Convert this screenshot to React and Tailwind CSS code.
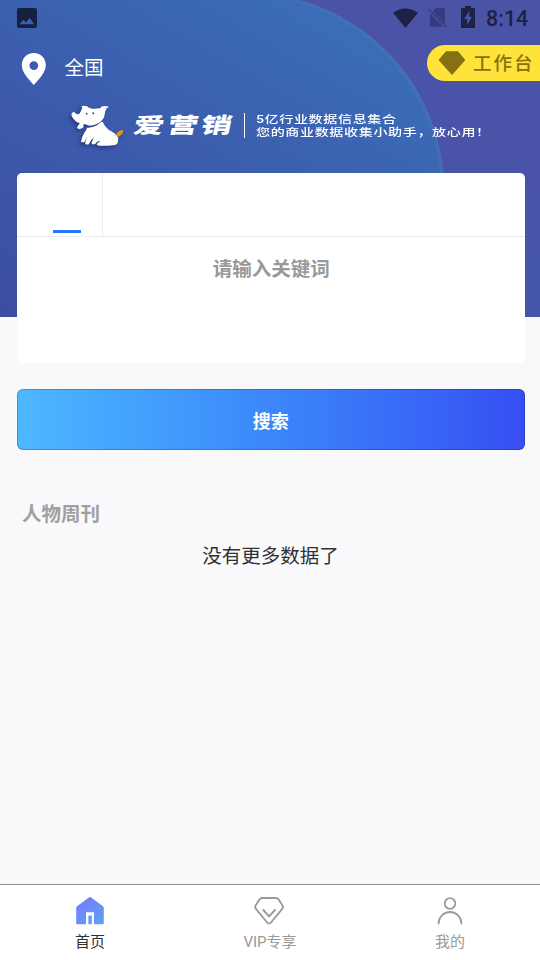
const tabs = [
  { label: "首页", icon: HomeIcon, active: true },
  { label: "VIP专享", icon: VipIcon, active: false },
  { label: "我的", icon: UserIcon, active: false },
];

function HomeIcon() {
  return (
    <svg width="30" height="30" viewBox="0 0 30 30">
      <defs>
        <linearGradient id="home" x1="0.2" y1="0" x2="0.8" y2="1">
          <stop offset="0" stopColor="#7a78fb" />
          <stop offset="1" stopColor="#5ca2f3" />
        </linearGradient>
      </defs>
      <path
        d="M14.2 1.3Q15 .7 15.8 1.3L28 10.2Q28.8 10.8 28.8 11.8V27.2Q28.8 28.2 27.8 28.2H19V16.2H11V28.2H2.2Q1.2 28.2 1.2 27.2V11.8Q1.2 10.8 2 10.2Z"
        fill="url(#home)"
      />
      <path d="M13.3 28.2V19.6H16.9V28.2Z" fill="#68a0f8" />
    </svg>
  );
}

function VipIcon() {
  return (
    <svg className="-ml-0.5" width="32" height="30" viewBox="0 0 32 30" fill="none" stroke="#9a9a9a" strokeWidth="1.9" strokeLinecap="round" strokeLinejoin="round">
      <path d="M9 2H23.2Q24.6 2 25.5 3.2L29.5 9.6Q30.5 11.3 29.2 12.9L18 26.5Q16.1 28.7 14.2 26.5L2.9 12.9Q1.6 11.3 2.6 9.6L6.7 3.2Q7.6 2 9 2Z" />
      <path d="M10.3 14L16.1 20.4L22 14" />
    </svg>
  );
}

function UserIcon() {
  return (
    <svg width="30" height="30" viewBox="0 0 30 30" fill="none" stroke="#9a9a9a" strokeWidth="1.8">
      <circle cx="15" cy="7.5" r="5.3" />
      <path d="M3.6 28.3V27.3A11.4 11.3 0 0 1 26.4 27.3V28.3" />
    </svg>
  );
}

function StatusBar() {
  return (
    <div className="flex h-9 items-center justify-between pl-[17px] pr-3">
      <svg width="20" height="20" viewBox="0 0 20 20">
        <path
          fillRule="evenodd"
          d="M2 0H18Q20 0 20 2V18Q20 20 18 20H2Q0 20 0 18V2Q0 0 2 0ZM2.5 16.3H17.3L12.5 10L9 14.5L6.5 11.8Z"
          fill="#15213f"
        />
      </svg>
      <div className="flex items-center">
        <svg width="25" height="22" viewBox="0 0 26 22" fill="#1f2046">
          <path d="M0 5.5Q13-3.5 26 5.5L13 21.5Z" />
        </svg>
        <svg className="ml-[10px]" width="20" height="22" viewBox="0 0 20 22">
          <path d="M8 1H15.5Q17 1 17 2.5V17.2L5 4Z" fill="#363b7d" />
          <path d="M2 6.5L15 19.8H4Q2 19.8 2 18.3Z" fill="#363b7d" />
          <path d="M.8 2.2L18.5 20.3" stroke="#363b7d" strokeWidth="1.6" />
        </svg>
        <svg className="mb-0.5 ml-[13px]" width="14" height="22" viewBox="0 0 14 22">
          <path fillRule="evenodd" d="M4 0H10V2H13Q14 2 14 3V21Q14 22 13 22H1Q0 22 0 21V3Q0 2 1 2H4ZM8.3 5.2L3 13H6.2V19L11 10.8H8.3Z" fill="#1f2046" />
        </svg>
        <span className="ml-[11px] mt-[2px] w-[42px] font-[Roboto] text-[21.5px] font-medium leading-none text-[#1f2046]">
          8:14
        </span>
      </div>
    </div>
  );
}

function Dog() {
  return (
    <svg className="drop-shadow-[-2px_2px_2px_rgba(20,30,90,0.55)]" width="56" height="44" viewBox="32 24 168 132">
      <path
        d="M66 44Q72 38 66 35Q70 30 84 34Q87 40 99 41Q111 42 119 40Q126 40 125 35Q136 31 148 35Q148 38 141 40Q141 47 137 50Q137 66 127 77Q112 91 91 92Q82 91 76 87L72 89Q74 94 71 98Q64 102 57 102L53 98L57 90L62 85Q54 84 48 78Q38 68 36 59Q37 50 45 51Q48 57 54 58Q62 58 66 44Z"
        fill="#fff"
      />
      <path
        d="M82 98Q104 100 125 81L130 80Q138 99 156 109Q170 116 176 127Q178 138 173 147Q165 152 145 152Q119 154 112 149Q113 142 124 140Q115 136 108 146Q100 151 96 145L103 128Q94 134 88 148Q78 150 77 144L84 124L76 140Q70 144 65 140Q67 126 76 111Q83 105 82 98Z"
        fill="#fff"
      />
      <path d="M171 117Q177 106 191 105Q193 115 181 124L176 126Z" fill="#de941e" />
      <path d="M155 123Q163 123 169 117L177 126Q174 119 155 123Z" fill="#d8d4cc" />
      <g fill="#30489a">
        <circle cx="82" cy="56" r="2.8" />
        <circle cx="102" cy="55" r="3" />
      </g>
    </svg>
  );
}

function Banner() {
  return (
    <div className="flex h-[46px] items-start pl-[70px] text-white">
      <Dog />
      <div className="ml-[8px] mt-[9px] w-[100px]">
        <div className="w-max origin-left skew-x-[-8deg] scale-x-[1.42] whitespace-nowrap text-[21.5px] font-black leading-[24px] tracking-[2.4px]">
          爱营销
        </div>
      </div>
      <div className="ml-[10px] mt-[10px] h-[25px] w-px bg-white" />
      <div className="ml-[11px] mt-[10px] h-[26px] w-[230px]">
        <div className="w-max origin-left scale-x-[1.34] whitespace-nowrap font-[Roboto,'Noto_Sans_CJK_SC',sans-serif] text-[10.5px] font-medium leading-[13px] tracking-[0.45px]">
          <p>5亿行业数据信息集合</p>
          <p>您的商业数据收集小助手，放心用！</p>
        </div>
      </div>
    </div>
  );
}

export default function App() {
  return (
    <div className="relative flex h-[960px] w-[540px] flex-col overflow-hidden bg-[#f9f8fb] font-['Noto_Sans_CJK_SC',sans-serif]">
      {/* header backdrop */}
      <div className="absolute inset-x-0 top-0 h-[316.5px] overflow-hidden bg-gradient-to-b from-[#4b53a6] via-[#4953a8] to-[#4356ab]">
        <div className="absolute -top-[7px] -left-[10px] h-[340px] w-[454px] rounded-tr-[197px] bg-linear-[30deg,#3c4ea3_5%,#3c5dae_50%,#3a6db8_85%] shadow-[inset_-2px_1px_4px_rgba(90,125,185,0.45)]" />
      </div>

      <div className="relative flex flex-1 flex-col">
        <StatusBar />

        <div className="mt-[9px] flex h-9 items-center justify-between">
          <div className="flex items-center pl-[21px]">
            <svg className="mt-3" width="25" height="33" viewBox="0 0 25 33">
              <path fillRule="evenodd" d="M12.8 0C5.8 0 .8 5.5 .8 12.1C.8 19.5 7.4 26 12.8 32C18.2 26 24.8 19.5 24.8 12.1C24.8 5.5 19.8 0 12.8 0ZM12.8 8.2A4.4 4.4 0 1 0 12.8 17A4.4 4.4 0 1 0 12.8 8.2Z" fill="#fff" />
            </svg>
            <span className="ml-[18.5px] mt-[7px] text-[19.5px] leading-7 text-white">全国</span>
          </div>
          <div className="flex h-9 w-[113px] items-center rounded-l-full bg-[#ffe23a] pl-3 text-[#857112]">
            <svg width="26" height="24" viewBox="0 0 26 24">
              <path d="M7 .8H19L25.8 9L13 23.6L0 9Z" fill="currentColor" stroke="currentColor" strokeLinejoin="round" />
            </svg>
            <span className="mb-0.5 ml-2 whitespace-nowrap text-[18.5px] font-medium leading-none tracking-[2px]">工作台</span>
          </div>
        </div>

        <div className="mt-[22px]">
          <Banner />
        </div>

        {/* search card */}
        <div className="ml-[16.5px] mr-[15px] mt-[23.5px] h-[190.5px] rounded-[5px] bg-white">
          <div className="flex h-[64px] border-b border-[#ebebeb]">
            <div className="flex w-[86.5px] items-end border-r border-[#ebebeb] pb-[3px] pl-[36px]">
              <div className="h-[3px] w-[28.5px] bg-[#2979ff]" />
            </div>
          </div>
          <p className="mt-[16px] pl-px text-center text-[19.5px] font-bold leading-[29px] text-[#999]">请输入关键词</p>
        </div>

        <button className="ml-[16.5px] mr-[15px] mt-[25.5px] h-[61.5px] rounded-[6px] border border-black/20 bg-gradient-to-r from-[#4db8ff] to-[#374df3] bg-origin-border pt-[2px] text-[18px] font-bold text-white">
          搜索
        </button>

        <h2 className="ml-[22px] mt-[48px] text-[19.5px] font-bold leading-[29px] text-[#9f9fa2]">人物周刊</h2>
        <p className="mt-[13px] pl-px text-center text-[19.5px] leading-[29px] text-[#303133]">没有更多数据了</p>
      </div>

      <nav className="relative grid h-[76px] grid-cols-3 border-t border-[#8f8e92] bg-white font-[Roboto,'Noto_Sans_CJK_SC',sans-serif]">
        {tabs.map(({ label, icon: Icon, active }) => (
          <div key={label} className="flex flex-col items-center pt-[11px]">
            <Icon />
            <span className={active ? "mt-[5px] text-[15px] leading-[22px] text-[#303133]" : "mt-[5px] text-[15px] leading-[22px] text-[#999]"}>
              {label}
            </span>
          </div>
        ))}
      </nav>
    </div>
  );
}
